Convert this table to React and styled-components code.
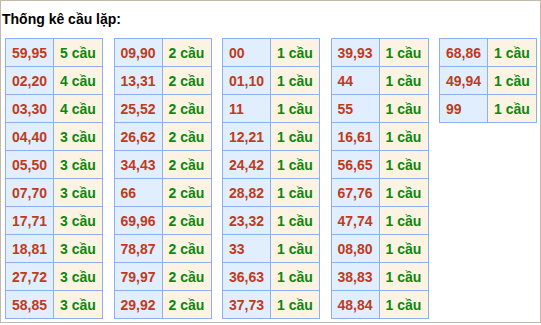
import React from "react";
import styled, { createGlobalStyle } from "styled-components";

const Global = createGlobalStyle`
  html, body { margin: 0; padding: 0; background: #fff; }
  body { font-family: "Liberation Sans", Arial, sans-serif; }
`;

const Panel = styled.div`
  width: 541px;
  height: 323px;
  box-sizing: border-box;
  border: 1px solid #c5b9a9;
  border-left-width: 1px;
  background: #fff;
`;

const Title = styled.div`
  padding: 9px 0 0 1px;
  font-size: 14px;
  line-height: 18px;
  font-weight: bold;
  color: #000;
`;

const Tables = styled.div`
  display: flex;
  align-items: flex-start;
  gap: 10.5px;
  margin-top: 10px;
  padding-left: 4px;
`;

const Table = styled.table`
  border-collapse: collapse;
  width: 98px;
  table-layout: fixed;
  border: 1px solid #8fb0ee;
`;

const Cell = styled.td`
  box-sizing: border-box;
  height: 28px;
  padding: 0 0 0 6px;
  border: 1px solid #8fb0ee;
  background: ${(p) => (p.$kind === "num" ? "#e1eefd" : "#fdf3e2")};
  color: ${(p) => (p.$kind === "num" ? "#bf3b1c" : "#0c8710")};
  font-size: 14px;
  font-weight: bold;
  white-space: nowrap;
  text-align: left;
  vertical-align: middle;
`;

const data = [
  [
    ["59,95", 5], ["02,20", 4], ["03,30", 4], ["04,40", 3], ["05,50", 3],
    ["07,70", 3], ["17,71", 3], ["18,81", 3], ["27,72", 3], ["58,85", 3],
  ],
  [
    ["09,90", 2], ["13,31", 2], ["25,52", 2], ["26,62", 2], ["34,43", 2],
    ["66", 2], ["69,96", 2], ["78,87", 2], ["79,97", 2], ["29,92", 2],
  ],
  [
    ["00", 1], ["01,10", 1], ["11", 1], ["12,21", 1], ["24,42", 1],
    ["28,82", 1], ["23,32", 1], ["33", 1], ["36,63", 1], ["37,73", 1],
  ],
  [
    ["39,93", 1], ["44", 1], ["55", 1], ["16,61", 1], ["56,65", 1],
    ["67,76", 1], ["47,74", 1], ["08,80", 1], ["38,83", 1], ["48,84", 1],
  ],
  [["68,86", 1], ["49,94", 1], ["99", 1]],
];

export default function App() {
  return (
    <>
      <Global />
      <Panel>
        <Title>Thống kê cầu lặp:</Title>
        <Tables>
          {data.map((col, i) => (
            <Table key={i}>
              <colgroup>
                <col style={{ width: "48px" }} />
                <col style={{ width: "49px" }} />
              </colgroup>
              <tbody>
                {col.map(([pair, n]) => (
                  <tr key={pair}>
                    <Cell $kind="num">{pair}</Cell>
                    <Cell $kind="count">{n} cầu</Cell>
                  </tr>
                ))}
              </tbody>
            </Table>
          ))}
        </Tables>
      </Panel>
    </>
  );
}
